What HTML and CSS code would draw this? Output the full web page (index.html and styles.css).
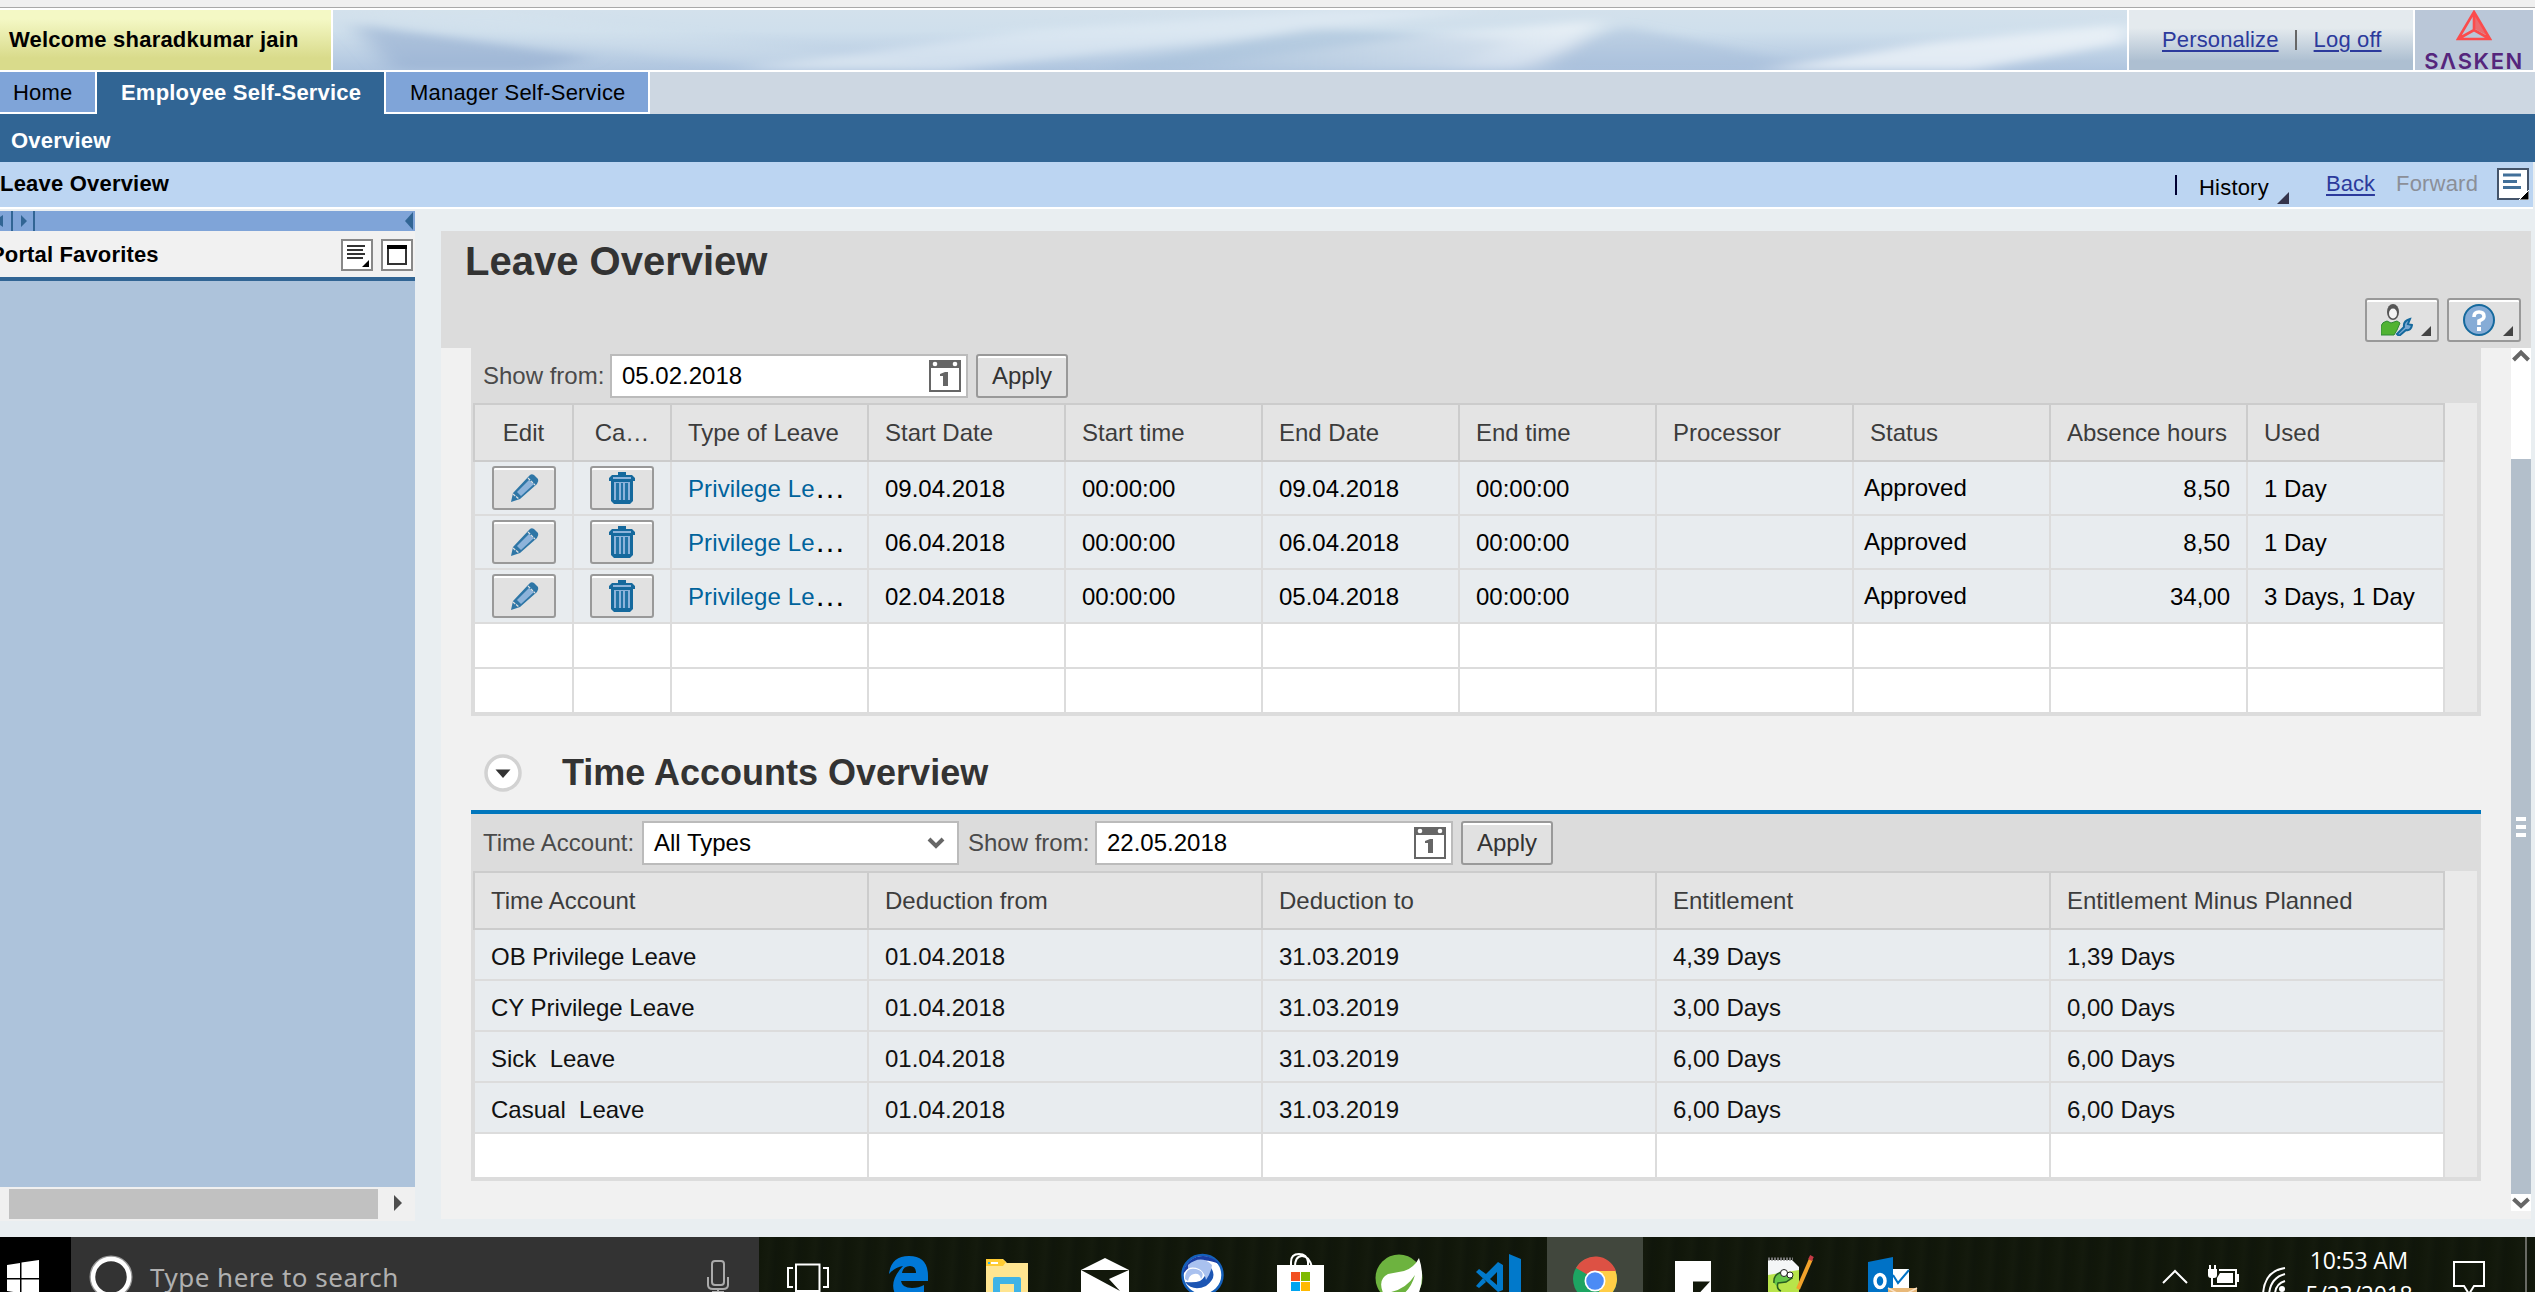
FILE: index.html
```html
<!DOCTYPE html>
<html lang="en">
<head>
<meta charset="utf-8">
<title>Leave Overview</title>
<link rel="stylesheet" href="styles.css">
</head>
<body>
<svg width="0" height="0" class="defs">
  <symbol id="pencil" viewBox="0 0 32 32"><path d="M3 30 5 21 21 4Q23 1 26 3L30 7Q31 9 29 12L12 27Z" fill="#2e76a6"/><path d="M9 20 21 8 26 12 13 24Z" fill="#8db3da"/><path d="M5 22 11 27M20 6 27 13" stroke="#e1e1e1" stroke-width="1.2" stroke-dasharray="3 1"/></symbol>
  <symbol id="trash" viewBox="0 0 32 32"><path d="M12 0h8v3h6l3 3v3H3V6l3-3h6z" fill="#15699d"/><path d="M7 5h18v2H7z" fill="#8db3da"/><path d="M5 9h22v20l-3 3H8l-3-3z" fill="#15699d"/><path d="M8 10h16v18H8z" fill="#8db3da"/><path d="M10 11h3v17h-3zM15 11h2v17h-2zM19 11h3v17h-3z" fill="#2273a5"/></symbol>
  <symbol id="calendar" viewBox="0 0 32 32"><path d="M0 0h32v32H0z" fill="#666"/><path d="M2 8h28v22H2z" fill="#fff"/><circle cx="6" cy="4" r="2.3" fill="#fff"/><circle cx="26" cy="4" r="2.3" fill="#fff"/><path d="M11 14 16 12h3v14h-5V16h-3z" fill="#666"/></symbol>
</svg>
<div class="chrome-edge"></div>
<header class="masthead">
  <div class="welcome">Welcome sharadkumar jain</div>
  <div class="banner">
    <svg viewBox="0 0 1794 60" preserveAspectRatio="none">
      <defs>
        <linearGradient id="sky" x2="0" y2="1"><stop offset="0" stop-color="#d3e1ec"/><stop offset=".35" stop-color="#cfdfec"/><stop offset="1" stop-color="#afc5df"/></linearGradient>
        <linearGradient id="fade"><stop offset="0" stop-color="#fff" stop-opacity="0"/><stop offset="1" stop-color="#fff" stop-opacity=".5"/></linearGradient>
        <filter id="soft"><feGaussianBlur stdDeviation="12 4"/></filter>
      </defs>
      <path d="M0 0h1794v60H0z" fill="url(#sky)"/>
      <g filter="url(#soft)">
        <path d="M20 14 260 48 200 60 60 60Z" fill="#8faace" opacity=".55"/>
        <path d="M0 0 330 46 480 60 640 60 160 0Z" fill="#d7e5f0" opacity=".3"/>
        <path d="M400 60 700 20 1000 0 1150 0 620 60Z" fill="#e3edf5" opacity=".6"/>
        <path d="M760 60 980 18 1180 30 1120 60Z" fill="#a2bcd8" opacity=".45"/>
        <path d="M820 60 1100 24 1270 10 1210 60Z" fill="url(#fade)"/>
        <path d="M1180 60 1290 16 1500 60Z" fill="#9fb9d6" opacity=".4"/>
        <path d="M1430 60 1600 32 1794 14 1794 32 1640 60Z" fill="#f0f5f9" opacity=".75"/>
      </g>
    </svg>
  </div>
  <div class="links"><a>Personalize</a><span class="bar"></span><a>Log off</a></div>
  <div class="logo">
    <svg width="36" height="31" viewBox="0 0 36 31"><path d="M18 2 34 29H2ZM18 2V20M2 29 18 20 34 29" fill="none" stroke="#fb4c4c" stroke-width="2.6"/><path d="M19 3 32 26 19 19Z" fill="#fb4c4c" opacity=".75"/></svg>
    <span>SΛSKEN</span>
  </div>
</header>
<nav class="tabs">
  <div class="tab home">Home</div><div class="tab active">Employee Self-Service</div><div class="tab manager">Manager Self-Service</div>
</nav>
<div class="subnav">Overview</div>
<div class="pagebar">
  <b>Leave Overview</b>
  <span class="vline"></span><span class="history">History</span>
  <svg class="corner" width="12" height="12" viewBox="0 0 12 12"><path d="M12 0v12H0z" fill="#34344c"/></svg>
  <a>Back</a><span class="forward">Forward</span>
  <svg width="32" height="32" viewBox="0 0 32 32"><path d="M1 1h30v30H1z" fill="#fff" stroke="#44546a" stroke-width="2"/><path d="M6 7h18M6 13.500h14M6 19.500h18" stroke="#427099" stroke-width="3"/><path d="M32 22v10H22z" fill="#000" stroke="#fff"/></svg>
</div>
<main class="work">
  <aside class="side">
    <div class="side-strip">
      <svg width="35" height="20" viewBox="0 0 35 20"><path d="M3 4v12l-3-2V6zM21 4l6 6-6 6z" fill="#316594"/><path d="M12 0v20M34 0v20" stroke="#316594" stroke-width="2"/></svg>
      <svg width="10" height="20" viewBox="0 0 10 20"><path d="M8 1v18L0 10z" fill="#316594"/></svg>
    </div>
    <div class="side-head"><span>Portal Favorites</span>
      <svg width="32" height="32" viewBox="0 0 32 32"><path d="M1 1h30v30H1z" fill="#fff" stroke="#888" stroke-width="2"/><path d="M6 7h18M6 11h16M6 15h18M6 19h16" stroke="#333" stroke-width="2.200"/><path d="M28 21v7h-7z" fill="#000"/></svg>
      <svg width="32" height="32" viewBox="0 0 32 32"><path d="M1 1h30v30H1z" fill="#fff" stroke="#888" stroke-width="2"/><path d="M7 7h18v18H7z" fill="none" stroke="#333" stroke-width="2"/><path d="M6 6h20v4H6z" fill="#000"/></svg>
    </div>
    <div class="side-body"></div>
    <div class="hscroll"><div class="hthumb"></div><svg width="8" height="16" viewBox="0 0 8 16"><path d="M0 0 8 8 0 16z" fill="#4d4d4d"/></svg></div>
  </aside>
  <section class="panel">
    <div class="title-area">
      <h1>Leave Overview</h1>
      <div class="tools">
        <div class="btn tool"><svg width="32" height="32" viewBox="0 0 32 32"><ellipse cx="12" cy="8" rx="6" ry="8" fill="#555"/><ellipse cx="12" cy="9.500" rx="4" ry="5" fill="#f4f4f4"/><path d="M0 31V22q1-4 6-5l4 2 6-2 3 2-3 7-3 5z" fill="#51b332" stroke="#2f8a35"/><path d="M16 30 23 23Q22 17 29 15L27 20 31 21Q30 27 25 26L18 32Z" fill="#79a9d3" stroke="#15699d" stroke-width="2"/></svg><i></i></div>
        <div class="btn tool"><svg width="32" height="32" viewBox="0 0 32 32"><circle cx="16" cy="16" r="15" fill="#86acd6" stroke="#15699d" stroke-width="2"/><path d="M11 13Q11 8 16 8T21 12.500Q21 15 16 17V21" fill="none" stroke="#fff" stroke-width="3.600"/><path d="M14 23h4v4h-4z" fill="#fff"/></svg><i></i></div>
      </div>
    </div>
    <div class="scroll">
      <div class="content">
        <div class="toolbar first"><label>Show from:</label><div class="field date">05.02.2018<svg width="32" height="32"><use href="#calendar"/></svg></div><div class="btn apply">Apply</div></div>
        <div class="grid leave">
          <div class="row head"><div class="mid">Edit</div><div class="mid">Ca…</div><div>Type of Leave</div><div>Start Date</div><div>Start time</div><div>End Date</div><div>End time</div><div>Processor</div><div>Status</div><div>Absence hours</div><div>Used</div></div>
          <div class="row data"><div class="mid"><span class="btn ic"><svg width="32" height="32"><use href="#pencil"/></svg></span></div><div class="mid"><span class="btn ic"><svg width="32" height="32"><use href="#trash"/></svg></span></div><div><a>Privilege Le</a><em>…</em></div><div>09.04.2018</div><div>00:00:00</div><div>09.04.2018</div><div>00:00:00</div><div></div><div class="status">Approved</div><div class="num">8,50</div><div>1 Day</div></div>
          <div class="row data"><div class="mid"><span class="btn ic"><svg width="32" height="32"><use href="#pencil"/></svg></span></div><div class="mid"><span class="btn ic"><svg width="32" height="32"><use href="#trash"/></svg></span></div><div><a>Privilege Le</a><em>…</em></div><div>06.04.2018</div><div>00:00:00</div><div>06.04.2018</div><div>00:00:00</div><div></div><div class="status">Approved</div><div class="num">8,50</div><div>1 Day</div></div>
          <div class="row data"><div class="mid"><span class="btn ic"><svg width="32" height="32"><use href="#pencil"/></svg></span></div><div class="mid"><span class="btn ic"><svg width="32" height="32"><use href="#trash"/></svg></span></div><div><a>Privilege Le</a><em>…</em></div><div>02.04.2018</div><div>00:00:00</div><div>05.04.2018</div><div>00:00:00</div><div></div><div class="status">Approved</div><div class="num">34,00</div><div>3 Days, 1 Day</div></div>
          <div class="row empty"><div></div><div></div><div></div><div></div><div></div><div></div><div></div><div></div><div></div><div></div><div></div></div>
          <div class="row empty"><div></div><div></div><div></div><div></div><div></div><div></div><div></div><div></div><div></div><div></div><div></div></div>
        </div>
        <div class="section-title">
          <svg width="38" height="38" viewBox="0 0 38 38"><circle cx="19" cy="19" r="17" fill="#fff" stroke="#d2d2d2" stroke-width="3.500"/><path d="M11.500 15.500h15L19 24z" fill="#333"/></svg>
          <h2>Time Accounts Overview</h2>
        </div>
        <div class="toolbar second"><label>Time Account:</label><div class="field select">All Types<svg width="18" height="12" viewBox="0 0 18 12"><path d="M2 2 9 9 16 2" fill="none" stroke="#666" stroke-width="4"/></svg></div><label>Show from:</label><div class="field date">22.05.2018<svg width="32" height="32"><use href="#calendar"/></svg></div><div class="btn apply">Apply</div></div>
        <div class="grid accounts">
          <div class="row head"><div>Time Account</div><div>Deduction from</div><div>Deduction to</div><div>Entitlement</div><div>Entitlement Minus Planned</div></div>
          <div class="row data"><div>OB Privilege Leave</div><div>01.04.2018</div><div>31.03.2019</div><div>4,39 Days</div><div>1,39 Days</div></div>
          <div class="row data"><div>CY Privilege Leave</div><div>01.04.2018</div><div>31.03.2019</div><div>3,00 Days</div><div>0,00 Days</div></div>
          <div class="row data"><div>Sick  Leave</div><div>01.04.2018</div><div>31.03.2019</div><div>6,00 Days</div><div>6,00 Days</div></div>
          <div class="row data"><div>Casual  Leave</div><div>01.04.2018</div><div>31.03.2019</div><div>6,00 Days</div><div>6,00 Days</div></div>
          <div class="row empty"><div></div><div></div><div></div><div></div><div></div></div>
        </div>
      </div>
      <div class="vscroll">
        <svg width="20" height="111" viewBox="0 0 20 111"><path d="M2.500 12 10 4.500 17.500 12" fill="none" stroke="#666" stroke-width="4"/></svg>
        <div class="vthumb"><i></i><i></i><i></i></div>
        <svg width="20" height="17" viewBox="0 0 20 17"><path d="M2.500 5 10 12 17.500 5" fill="none" stroke="#666" stroke-width="4"/></svg>
      </div>
    </div>
  </section>
</main>
<footer class="taskbar">
  <div class="start"><svg width="71" height="55" viewBox="0 0 71 55"><path d="M7 28 20 26V41H7zM21.500 25.500 39 23V41H21.500zM7 42.500H20V56L7 54zM21.500 42.500H39V60L21.500 57z" fill="#fff"/></svg></div>
  <div class="search">
    <svg width="46" height="46" viewBox="0 0 46 46"><circle cx="22" cy="23" r="19" fill="none" stroke="#999" stroke-width="5"/><circle cx="22" cy="23" r="18" fill="none" stroke="#fff" stroke-width="4.500"/></svg>
    <span>Type here to search</span>
    <svg width="24" height="40" viewBox="0 0 24 40"><rect x="6" y="1" width="12" height="24" rx="3" fill="none" stroke="#aaa" stroke-width="2"/><path d="M2 17v8q0 4 5 4h10q5 0 5-4v-8M12 29v4M6 32h12" fill="none" stroke="#aaa" stroke-width="2"/></svg>
  </div>
  <div class="apps">
    <div><svg viewBox="0 0 98 55"><path d="M34 31H29V50H34M64 31h5v19h-5M37 27.500H60.500V54H37z" fill="none" stroke="#fff" stroke-width="2"/></svg></div>
    <div><svg viewBox="0 0 98 55"><path d="M32 37Q34 19 52 19 71 19 71 39V44H44Q45 51 55 51 62 51 67 48V60H40Q30 46 46 29 38 30 32 37ZM45 36H59Q59 29 53 29 46 29 45 36Z" fill="#0078d7"/></svg></div>
    <div><svg viewBox="0 0 98 55"><path d="M31 22H48L52 26H73V60H31z" fill="#ffe591"/><path d="M31 22H47L51 25 48 29H31z" fill="#ffcb32"/><path d="M33 25h2v2h-2z" fill="#2fb4e9"/><path d="M36 25h7v2h-7z" fill="#fff"/><path d="M38 60V42q0-2 2-2H64q2 0 2 2V60H59V47H45V60z" fill="#3fb3e6"/></svg></div>
    <div><svg viewBox="0 0 98 55"><path d="M28 33 52 21 76 33V60H28z" fill="#fff"/><path d="M28 33H76L56 42 67 54Z" fill="#12180b"/></svg></div>
    <div><svg viewBox="0 0 98 55"><circle cx="51.500" cy="38" r="20" fill="#fff" stroke="#1460bb" stroke-width="2.500"/><path d="M32 38A20 20 0 0 1 68 27Q53 20 43 27 34 33 32 38Z" fill="#1a3ea4"/><path d="M55 26Q70 38 55 49 42 55 34 45 44 46 49 44 58 38 55 26Z" fill="#1c55b3"/><path d="M37 28Q50 17 61 28 60 36 55 43 52 28 37 31ZM34 42Q34 30 45 32 55 35 50 42 49 36 43 37 38 38 37 44Z" fill="#a9c1ef"/></svg></div>
    <div><svg viewBox="0 0 98 55"><path d="M42 30V25Q42 17 50 17T59 25V30M46 30Q46 19 53 19T63 30" fill="none" stroke="#fff" stroke-width="2"/><path d="M28 28H75V60H28z" fill="#fff"/><path d="M42 35h9v9h-9z" fill="#f25022"/><path d="M52 35h9v9h-9z" fill="#7fba00"/><path d="M42 45h9v9h-9z" fill="#00a4ef"/><path d="M52 45h9v9h-9z" fill="#ffb900"/></svg></div>
    <div><svg viewBox="0 0 98 55"><circle cx="52" cy="41" r="23.500" fill="#6db33f"/><path d="M72 21Q79 42 70 60H38Q29 43 41 37L57 34Q67 31 72 21Z" fill="#fff"/><path d="M38 56Q58 54 68 38 63 55 51 60Z" fill="#6db33f"/></svg></div>
    <div><svg viewBox="-2 0 98 55"><path d="M62 17 74 22V60H62zM51 25 56 28V53L51 55 29 35 32 32 39 37zM50 35 43 42 50 48zM29 49 32 51 39 45 36 41zM26 57 45 58V60H27z" fill="#0179cb"/></svg></div>
    <div class="current"><svg viewBox="0 0 98 55"><circle cx="48" cy="42" r="22" fill="#1da462"/><path d="M48 42 29 31A22 22 0 0 1 69 34z" fill="#dd5144"/><path d="M48 34H68.500A22 22 0 0 1 48 64L56 46z" fill="#ffcd46"/><circle cx="48" cy="44" r="10.500" fill="#fff"/><circle cx="48" cy="44" r="8.800" fill="#4c8bf5"/></svg></div>
    <div><svg viewBox="0 0 98 55"><path d="M30 24H66V60H30z" fill="#fff"/><path d="M48 44.500H65L48 63z" fill="#12180b"/></svg></div>
    <div><svg viewBox="0 0 98 55"><path d="M25 23H49L56 30V60H25z" fill="#f4f6f7"/><path d="M25 38 56 33V60H25z" fill="#b8e44a"/><path d="M25 22H50" stroke="#777" stroke-width="3" stroke-dasharray="2 1"/><path d="M31 46q-1-9 8-11l7 2 3 4-6 4-8 1q-2 6 3 8" fill="#66c748" stroke="#285d20" stroke-width="1.500"/><circle cx="41" cy="36" r="3.500" fill="#fff" stroke="#222"/><circle cx="47" cy="38" r="3" fill="#fff" stroke="#222"/><path d="M55 52 68 22" stroke="#f2a32b" stroke-width="4"/><path d="M67 23 69 19" stroke="#c43a45" stroke-width="4"/></svg></div>
    <div><svg viewBox="0 0 98 55"><path d="M27 25 52 20V60H27z" fill="#0072c6"/><path d="M52 32H68V52H52z" fill="#fff"/><path d="M52 38 57 46 68 33" fill="none" stroke="#0072c6" stroke-width="2"/><ellipse cx="39" cy="44" rx="5" ry="6.500" fill="none" stroke="#fff" stroke-width="3.500"/><path d="M47 51H76V60H47z" fill="#e8b878"/><path d="M47 51 61 59 76 51" fill="none" stroke="#fbe2c4" stroke-width="1.500"/></svg></div>
  </div>
  <div class="tray">
    <svg width="140" height="55" viewBox="0 0 140 55"><path d="M2 46 14 34 26 46" fill="none" stroke="#fff" stroke-width="2"/><path d="M58 33H75V49H56" fill="none" stroke="#fff" stroke-width="2"/><path d="M59 36H72V46H56V41zM76 37h2v8h-2zM47 32h9v6q0 3-3 3h-3q-3 0-3-3z" fill="#fff"/><path d="M49 28v5M54 28v5M51 40v9h6" stroke="#fff" stroke-width="2" fill="none"/><circle cx="121" cy="52" r="3" fill="#fff"/><path d="M102 58Q103 34 124 31M108 58Q109 41 124 37M114 58Q114 47 124 44" fill="none" stroke="#fff" stroke-width="2"/></svg>
    <div class="clock"><div>10:53 AM</div><div>5/23/2018</div></div>
    <svg width="34" height="55" viewBox="0 0 34 55"><path d="M2 25H32V49H22L17 57 12 49H2z" fill="none" stroke="#fff" stroke-width="2"/></svg>
    <div class="peek"></div>
  </div>
</footer>
</body>
</html>
```
FILE: styles.css
```css
* { box-sizing: border-box; }
html, body { margin: 0; height: 1292px; overflow: hidden; }
body { font-family: "Liberation Sans", Arial, sans-serif; font-size: 22px; color: #000; background: #e9eef1; display: flex; flex-direction: column; }
svg { display: block; flex: none; }
.defs { display: none; }

.chrome-edge { height: 8px; background: #f0f0f0; border-bottom: 1px solid #a9a9a9; flex: none; }
.masthead { height: 64px; flex: none; display: flex; gap: 2px; padding: 2px 2px 2px 0; background: #fff; }
.welcome { width: 331px; padding-left: 9px; font-weight: bold; line-height: 60px; letter-spacing: .22px; white-space: nowrap; background: linear-gradient(#f4f8c5 15%, #d9db8b 80%); }
.banner { flex: 1; overflow: hidden; }
.banner svg { width: 100%; height: 60px; }
.links { width: 284px; padding-left: 33px; display: flex; align-items: center; letter-spacing: .15px; background: linear-gradient(#e4eaee 30%, #adbfd1 85%); }
a { color: #2c3a9c; }
.links a, .pagebar a { text-decoration: underline; text-underline-offset: 3px; text-decoration-thickness: 2px; }
.bar { width: 2px; height: 20px; margin: 0 17px 0 16px; background: #666; }
.logo { width: 118px; background: #bac7d8; display: flex; flex-direction: column; align-items: center; }
.logo span { font: 600 22px/22px Inter, sans-serif; color: #55257c; margin-top: 9px; letter-spacing: 1.6px; }

.tabs { height: 42px; flex: none; display: flex; background: #cdd7e2; line-height: 41px; }
.tab { background: #7fa4d8; border-right: 2px solid #fff; border-bottom: 2px solid #fff; white-space: nowrap; }
.home { width: 97px; padding-left: 13px; letter-spacing: .2px; }
.active { width: 289px; padding-left: 24px; font-weight: bold; color: #fff; background: #316594; border-bottom: 0; letter-spacing: .2px; }
.manager { width: 264px; padding-left: 24px; letter-spacing: .2px; }
.subnav { height: 48px; flex: none; padding-left: 11px; background: #316594; color: #fff; font-weight: bold; line-height: 54px; letter-spacing: .2px; }
.pagebar { height: 47px; flex: none; margin-right: 2px; display: flex; background: #bcd5f2; border-bottom: 2px solid #fff; line-height: 43px; padding-right: 4px; }
.pagebar b { flex: 1; letter-spacing: .2px; }
.vline { width: 2px; height: 20px; margin: 13px 22px 0 0; background: #003; }
.history { width: 78px; padding-top: 4px; letter-spacing: .2px; }
.corner { margin: 30px 37px 0 0; }
.pagebar a { width: 70px; }
.forward { width: 101px; color: #8b8f98; letter-spacing: .2px; }
.pagebar > svg:last-child { margin-top: 6px; }

.work { display: flex; flex: none; height: 1028px; }
.side { width: 415px; margin-top: 2px; height: 1010px; display: flex; flex-direction: column; }
.side-strip { height: 20px; display: flex; justify-content: space-between; background: #7fa4d8; }
.side-head { height: 50px; display: flex; align-items: center; gap: 8px; padding: 0 2px 0 0; background: #f1f1f1; border-bottom: 4px solid #316594; font-weight: bold; overflow: hidden; }
.side-head span { flex: 1; margin-left: -10px; line-height: 46px; white-space: nowrap; padding-top: 1px; letter-spacing: .15px; }
.side-head svg { margin-top: 2px; }
.side-body { flex: 1; background: #adc3db; }
.hscroll { height: 34px; display: flex; align-items: center; gap: 16px; padding-left: 9px; background: #f0f0f0; }
.hthumb { width: 369px; height: 30px; background: #c1c1c1; }
.hscroll svg { margin-top: -2px; }

.panel { width: 2090px; height: 988px; margin: 22px 0 0 26px; background: #f1f1f1; }
.title-area { height: 117px; display: flex; justify-content: space-between; background: #dcdcdc; }
h1, h2 { margin: 0; color: #333; white-space: nowrap; }
h1 { padding-left: 24px; font-size: 40px; line-height: 60px; }
.tools { display: flex; gap: 8px; padding: 67px 10px 0 0; }
.btn { background: #e1e1e1; border: 2px solid #999; border-radius: 3px; box-shadow: inset 0 2px #fff; display: flex; align-items: center; color: #333; }
.tool { width: 74px; height: 44px; padding-left: 14px; }
.tool i { align-self: flex-end; width: 10px; height: 10px; margin: 0 0 4px 8px; background: #444; clip-path: polygon(100% 0, 100% 100%, 0 100%); }
.scroll { height: 871px; display: flex; justify-content: space-between; }
.content { width: 2010px; margin-left: 30px; font-size: 24px; }
.toolbar { display: flex; align-items: center; background: #dcdcdc; color: #4a4a4a; white-space: nowrap; }
.first { height: 55px; padding-left: 12px; }
.second { height: 61px; padding-left: 12px; border-top: 4px solid #0076bc; }
.first label { width: 127px; }
.second label:first-child { width: 159px; }
.second .select + label { width: 127px; }
.field { height: 44px; padding: 0 5px 0 10px; display: flex; align-items: center; justify-content: space-between; background: #fff; border: 2px solid #bbb; color: #000; }
.date { width: 358px; }
.select { width: 317px; padding-right: 12px; margin-right: 9px; }
.apply { height: 44px; width: 92px; margin-left: 8px; justify-content: center; }

.grid { background: #eaeaea; border: 4px solid #dcdcdc; border-left-width: 2px; border-top: 0; }
.row { display: grid; width: 1972px; border-left: 2px solid #dcdcdc; }
.leave .row { grid-template-columns: 99px 98px repeat(9, 197px); }
.accounts .row { grid-template-columns: repeat(5, 394px); }
.row > div { display: flex; align-items: center; padding-left: 16px; white-space: pre; border-right: 2px solid #dcdcdc; border-bottom: 2px solid #dcdcdc; overflow: hidden; }
.row.head { height: 59px; border-color: #ccc; }
.row.head > div { background: #e4e4e4; color: #3c3c3c; border-color: #ccc; border-top: 2px solid #ccc; }
.data > div { background: #e8ecef; }
.leave .data { height: 54px; }
.leave .data > div { padding-top: 2px; }
.row > .mid, .leave .data > .mid { justify-content: center; padding: 0; }
.accounts .data { height: 51px; color: #111; }
.accounts .data > div { padding-top: 5px; }
.empty { height: 45px; }
.empty > div { background: #fff; }
.empty:last-child { height: 43px; }
.empty:last-child > div { border-bottom: 0; }
.data a { color: #00639c; letter-spacing: .1px; }
.data em { font-style: normal; font-size: 31px; line-height: 24px; margin-top: -3px; }
.leave .data > .status { padding: 0 0 1px 10px; }
.row > .num { justify-content: flex-end; padding-right: 16px; }
.ic { width: 64px; height: 44px; justify-content: center; }
.section-title { height: 94px; display: flex; align-items: center; padding: 18px 0 0 13px; gap: 40px; }
.section-title svg { margin-top: 2px; }
h2 { font-size: 36px; margin-top: 2px; }
.vscroll { width: 20px; background: #fff; height: 863px; }
.vthumb { height: 735px; background: #b3bfcb; display: flex; flex-direction: column; align-items: center; justify-content: center; gap: 4px; }
.vthumb i { width: 10px; height: 4px; background: #fff; }

.taskbar { height: 55px; flex: none; display: flex; background: repeating-linear-gradient(94deg, #11170a 0, #141a0d 9px, #10160b 16px, #11170a 23px); color: #fff; overflow: hidden; }
.start { width: 71px; background: #000; }
.search { width: 688px; display: flex; background: #333; font: 26px/44px "Noto Sans", sans-serif; color: #b0b0b0; }
.search svg:first-child { margin: 17px 0 0 18px; }
.search span { flex: 1; margin: 18px 0 0 15px; height: 37px; letter-spacing: .5px; white-space: nowrap; }
.search svg:last-child { margin: 23px 29px 0 0; }
.apps { display: flex; flex: 1; }
.apps div { width: 98px; }
.apps svg { width: 98px; height: 55px; }
.apps .current { width: 96px; margin: 0 2px 0 4px; background: #41473d; }
.tray { display: flex; }
.clock { width: 120px; height: 80px; margin-left: -2px; padding-top: 6px; text-align: center; font: 23px/34px "Open Sans", sans-serif; letter-spacing: -.2px; white-space: nowrap; }
.tray > svg:nth-of-type(2) { margin-left: 33px; }
.peek { width: 10px; margin-left: 39px; border-left: 2px solid #686a64; }
```
